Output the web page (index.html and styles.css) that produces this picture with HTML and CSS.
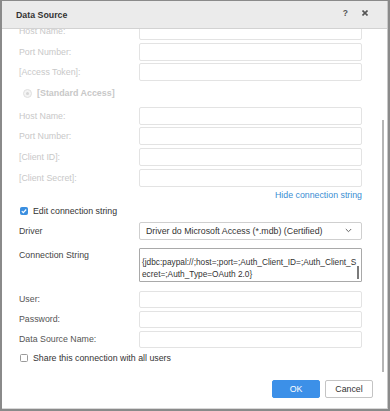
FILE: index.html
```html
<!DOCTYPE html>
<html>
<head>
<meta charset="utf-8">
<link rel="stylesheet" href="styles.css">
</head>
<body>
<div class="dialog">
  <div class="header">
    <span class="title">Data Source</span>
    <span class="tools">
      <span class="help">?</span>
      <svg class="close" width="6" height="6" viewBox="0 0 6 6"><path d="M0.5 0.5L5.5 5.5M5.5 0.5L0.5 5.5" stroke="#555" stroke-width="1.6"/></svg>
    </span>
  </div>
  <div class="body">
    <div class="content">
      <div class="row dis first"><span class="label">Host Name:</span><div class="input"></div></div>
      <div class="row dis"><span class="label">Port Number:</span><div class="input"></div></div>
      <div class="row dis"><span class="label">[Access Token]:</span><div class="input"></div></div>
      <div class="radio-row"><span class="radio"><span class="dot"></span></span><span class="radio-label">[Standard Access]</span></div>
      <div class="row dis"><span class="label">Host Name:</span><div class="input"></div></div>
      <div class="row dis"><span class="label">Port Number:</span><div class="input"></div></div>
      <div class="row dis"><span class="label">[Client ID]:</span><div class="input"></div></div>
      <div class="row dis"><span class="label">[Client Secret]:</span><div class="input"></div></div>
      <div class="link-row"><span class="link">Hide connection string</span></div>
      <div class="check-row edit"><span class="check on"><svg width="8" height="8" viewBox="0 0 8 8"><path d="M1.8 4.1L3.3 5.6L6.2 2.5" stroke="#fff" stroke-width="1.2" fill="none"/></svg></span><span class="check-label">Edit connection string</span></div>
      <div class="row sel-row"><span class="label">Driver</span><div class="select"><span>Driver do Microsoft Access (*.mdb) (Certified)</span><svg width="7" height="5" viewBox="0 0 7 5"><path d="M0.8 1L3.5 3.7L6.2 1" stroke="#666" stroke-width="1" fill="none"/></svg></div></div>
      <div class="row ta-row"><span class="label">Connection String</span><div class="textarea"><div class="ta-text">{jdbc:paypal://;host=;port=;Auth_Client_ID=;Auth_Client_S<br>ecret=;Auth_Type=OAuth 2.0}</div><span class="ta-thumb"></span></div></div>
      <div class="row sm user"><span class="label">User:</span><div class="input"></div></div>
      <div class="row sm"><span class="label">Password:</span><div class="input"></div></div>
      <div class="row sm"><span class="label">Data Source Name:</span><div class="input"></div></div>
      <div class="check-row share"><span class="check"></span><span class="check-label">Share this connection with all users</span></div>
    </div>
    <div class="thumb"></div>
  </div>
  <div class="footer">
    <button class="btn ok">OK</button>
    <button class="btn cancel">Cancel</button>
  </div>
</div>
</body>
</html>
```
FILE: styles.css
```css
html, body {
  margin: 0;
  padding: 0;
  background: #8a8a8a;
  width: 390px;
  height: 411px;
  overflow: hidden;
}
body {
  font-family: "Liberation Sans", Arial, sans-serif;
  font-size: 8.8px;
  color: #555;
}
.dialog {
  margin: 1px 0 0 2px;
  width: 386px;
  height: 408px;
  background: #fff;
  border-right: 1px solid #c8c8c8;
  border-bottom: 1px solid #d8d8d8;
  box-sizing: border-box;
  display: flex;
  flex-direction: column;
  position: relative;
}
.header {
  height: 28px;
  box-sizing: border-box;
  background: #ebebeb;
  border-bottom: 1px solid #d2d2d2;
  display: flex;
  align-items: center;
  justify-content: space-between;
  padding: 0 19px 0 14px;
  flex: none;
}
.title {
  font-weight: bold;
  color: #333;
  font-size: 8.8px;
  margin-top: 1px;
}
.tools {
  display: flex;
  align-items: center;
  gap: 14px;
  margin-top: -3px;
}
.help {
  font-weight: bold;
  color: #555;
  font-size: 8.5px;
}
.close { display: block; }
.body {
  height: 343px;
  overflow: hidden;
  flex: none;
  position: relative;
}
.content {
  margin-top: -7px;
  padding-left: 17px;
  width: 343px;
  display: flex;
  flex-direction: column;
}
.row {
  display: grid;
  grid-template-columns: 120px 223px;
  align-items: center;
  height: 18px;
  margin-bottom: 2.6px;
}
.row.dis .label { color: #c8c8c8; }
.input {
  height: 18px;
  box-sizing: border-box;
  border: 1px solid #e3e3e3;
  border-radius: 2px;
  background: #fff;
}
.radio-row {
  height: 19px;
  display: flex;
  align-items: center;
  margin-bottom: 4.1px;
  padding-left: 4px;
  gap: 5px;
}
.radio {
  width: 7px;
  height: 7px;
  border-radius: 50%;
  border: 1px solid #e0e0e0;
  background: #f4f4f4;
  display: flex;
  align-items: center;
  justify-content: center;
}
.dot {
  width: 3px;
  height: 3px;
  border-radius: 50%;
  background: #d6d6d6;
}
.radio-label {
  font-weight: bold;
  color: #c8c8c8;
  font-size: 8.9px;
}
.link-row {
  height: 14px;
  margin-top: -1.4px;
  display: flex;
  align-items: center;
  justify-content: flex-end;
}
.link { color: #3a8dd3; }
.check-row {
  height: 14px;
  display: flex;
  align-items: center;
  gap: 5px;
  padding-left: 1px;
}
.check-row.edit { margin-top: 1.7px; margin-bottom: 4px; }
.check {
  width: 8px;
  height: 8px;
  box-sizing: border-box;
  border: 1px solid #9a9a9a;
  border-radius: 1.5px;
  background: #fff;
  display: flex;
  align-items: center;
  justify-content: center;
}
.check.on {
  background: #3b8fe0;
  border-color: #3b8fe0;
}
.check svg { display: block; flex: none; }
.check-label { color: #333; }
.sel-row { height: 18.3px; margin-bottom: 7.7px; }
.sel-row .label { color: #444; }
.select {
  height: 18.3px;
  box-sizing: border-box;
  border: 1px solid #cfcfcf;
  border-radius: 2px;
  display: flex;
  align-items: center;
  justify-content: space-between;
  padding: 0 9px 0 6px;
  color: #333;
}
.select svg { display: block; }
.ta-row {
  height: 34.5px;
  align-items: start;
  margin-bottom: 8.5px;
}
.ta-row .label { padding-top: 2px; color: #444; }
.textarea {
  height: 34.5px;
  box-sizing: border-box;
  border: 1px solid #a9a9a9;
  border-radius: 1px;
  padding: 8.5px 0 0 2px;
  position: relative;
  overflow: hidden;
  color: #333;
}
.ta-text {
  font-size: 8.3px;
  line-height: 11.5px;
  white-space: nowrap;
}
.ta-thumb {
  position: absolute;
  left: 217px;
  top: 17px;
  width: 1.5px;
  height: 13px;
  background: #7a7a7a;
}
.row.sm { height: 17px; margin-bottom: 3.2px; }
.row.sm .input { height: 17px; }
.row.sm .label { color: #555; }
.check-row.share { margin-top: 0; }
.thumb {
  position: absolute;
  left: 380px;
  top: 91px;
  width: 2px;
  height: 252px;
  background: #b5b5b5;
}
.footer {
  flex: 1;
  display: flex;
  justify-content: flex-end;
  align-items: flex-start;
  padding: 8px 14px 0 0;
  gap: 5px;
}
.btn {
  width: 48px;
  height: 17.5px;
  box-sizing: border-box;
  border-radius: 2px;
  font-family: "Liberation Sans", Arial, sans-serif;
  font-size: 8.8px;
  padding: 0;
  margin: 0;
}
.ok {
  background: #3c90e8;
  border: 1px solid #3c90e8;
  color: #fff;
}
.cancel {
  background: #fff;
  border: 1px solid #c4c4c4;
  color: #333;
}
```
